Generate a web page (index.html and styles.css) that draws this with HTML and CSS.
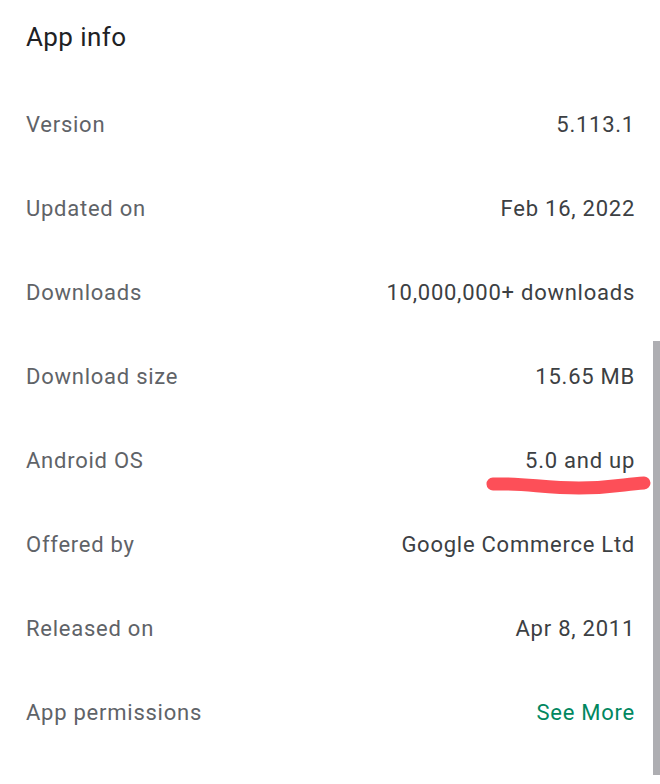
FILE: index.html
```html
<!DOCTYPE html>
<html lang="en">
  <head>
    <meta charset="UTF-8" />
    <meta name="viewport" content="width=device-width, initial-scale=1.0" />
    <title>App info</title>
    <link rel="stylesheet" href="styles.css">
  </head>
  <body>
    <div class="sheet">
      <h1 class="title">App info</h1>

      <ul class="info-list">
        <li class="info-row">
          <span class="label">Version</span>
          <span class="value">5.113.1</span>
        </li>
        <li class="info-row">
          <span class="label">Updated on</span>
          <span class="value">Feb 16, 2022</span>
        </li>
        <li class="info-row">
          <span class="label">Downloads</span>
          <span class="value">10,000,000+ downloads</span>
        </li>
        <li class="info-row">
          <span class="label">Download size</span>
          <span class="value">15.65 MB</span>
        </li>
        <li class="info-row marked">
          <span class="label">Android OS</span>
          <span class="value">5.0 and up</span>
          <!-- hand drawn marker under the value -->
          <svg class="scribble" width="170" height="30" viewBox="0 0 170 30">
            <path d="M9 14 C 40 13, 60 18, 95 18 S 140 14, 160 13" fill="none" stroke="#fd4f58" stroke-width="13" stroke-linecap="round" />
          </svg>
        </li>
        <li class="info-row">
          <span class="label">Offered by</span>
          <span class="value">Google Commerce Ltd</span>
        </li>
        <li class="info-row">
          <span class="label">Released on</span>
          <span class="value">Apr 8, 2011</span>
        </li>
        <li class="info-row">
          <span class="label">App permissions</span>
          <span class="value link">See More</span>
        </li>
      </ul>

      <div class="scrollbar"></div>
    </div>
  </body>
</html>
```

FILE: styles.css
```css
/* Global Styles */
body {
  margin: 0;
  padding: 0;
  background: #ffffff;
  font-family: Roboto, "Noto Sans", sans-serif;
  color: #202124;
}

.sheet {
  position: relative;
  width: 660px;
  height: 784px;
  overflow: hidden;
  padding: 0 26px;
  box-sizing: border-box;
}

.title {
  margin: 0;
  height: 82px;
  padding-top: 20px;
  box-sizing: border-box;
  font-size: 26px;
  line-height: 34px;
  font-weight: 400;
  letter-spacing: 0.4px;
  color: #202124;
}

/* Info rows */
.info-list {
  list-style: none;
  margin: 0;
  padding: 0;
}

.info-row {
  position: relative;
  display: flex;
  justify-content: space-between;
  align-items: center;
  height: 84px;
  font-size: 22px;
  letter-spacing: 0.75px;
}

.label {
  color: #5f6368;
}

.value {
  color: #3c4043;
  margin-right: -1px;
}

.link {
  color: #01875f;
}

.scribble {
  position: absolute;
  right: -20px;
  top: 52px;
}

/* Scrollbar thumb on the right edge */
.scrollbar {
  position: absolute;
  right: 0;
  top: 341px;
  width: 7px;
  height: 434px;
  background: #aeaeb2;
}
```
